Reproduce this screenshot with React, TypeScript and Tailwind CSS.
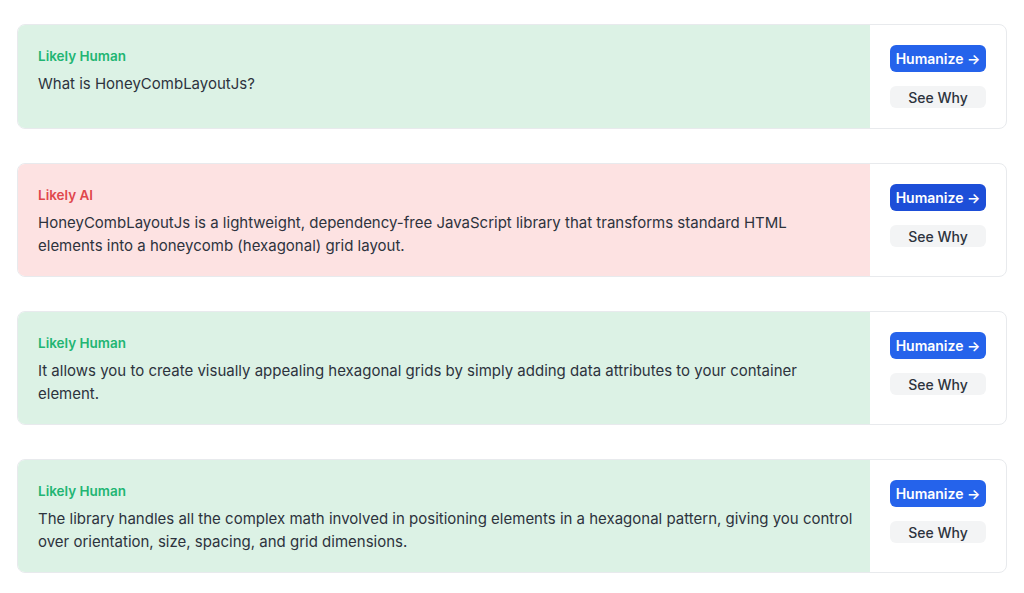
import React from "react";

type Row = {
  human: boolean;
  text: string;
  active?: boolean;
};

const rows: Row[] = [
  { human: true, text: "What is HoneyCombLayoutJs?" },
  {
    human: false,
    active: true,
    text: "HoneyCombLayoutJs is a lightweight, dependency-free JavaScript library that transforms standard HTML elements into a honeycomb (hexagonal) grid layout.",
  },
  {
    human: true,
    text: "It allows you to create visually appealing hexagonal grids by simply adding data attributes to your container element.",
  },
  {
    human: true,
    text: "The library handles all the complex math involved in positioning elements in a hexagonal pattern, giving you control over orientation, size, spacing, and grid dimensions.",
  },
];

const SentenceCard = ({ row }: { row: Row }) => {
  return (
    <div className="flex border border-[#e8eaed] rounded-lg overflow-hidden bg-white">
      <div
        className={
          row.human
            ? "flex-1 bg-[#dcf2e5] pl-[20px] pr-[3px] pt-[21px] pb-[19px]"
            : "flex-1 bg-[#fde2e2] pl-[20px] pr-[3px] pt-[21px] pb-[19px]"
        }
      >
        <p
          className={
            row.human
              ? "text-[13.5px] leading-5 font-semibold text-[#22b573]"
              : "text-[13.5px] leading-5 font-semibold text-[#e0474c]"
          }
        >
          {row.human ? "Likely Human" : "Likely AI"}
        </p>
        <p className="mt-[6px] max-w-[816px] text-[15px] leading-[23px] text-[#2d333d]">
          {row.text}
        </p>
      </div>
      <div className="w-[136px] shrink-0 flex flex-col items-center pt-[20px] pb-[20px] gap-[14px]">
        <button
          className={
            row.active
              ? "w-[96px] h-[27px] rounded-md bg-[#1d4ed8] text-white text-[14px] font-semibold"
              : "w-[96px] h-[27px] rounded-md bg-[#2563eb] text-white text-[14px] font-semibold"
          }
        >
          Humanize →
        </button>
        <button className="w-[96px] h-[22px] rounded-md bg-[#f3f4f5] text-[#2d333d] text-[14px] font-medium">
          See Why
        </button>
      </div>
    </div>
  );
};

export default function App() {
  return (
    <main
      className="min-h-screen bg-white pt-[24px] px-[17px] flex flex-col gap-[34px]"
      style={{ fontFamily: "Inter, 'Noto Sans', sans-serif" }}
    >
      {rows.map((row, i) => (
        <SentenceCard key={i} row={row} />
      ))}
    </main>
  );
}
